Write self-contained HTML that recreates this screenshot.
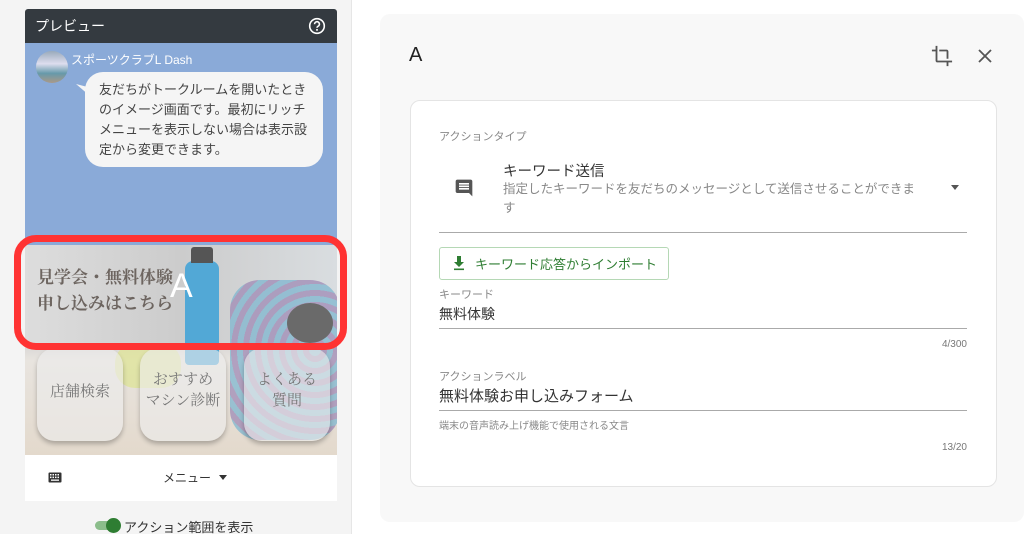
<!DOCTYPE html>
<html><head><meta charset="utf-8"><style>
*{box-sizing:border-box;margin:0;padding:0}
body{width:1024px;height:534px;overflow:hidden;background:#fff;font-family:"Liberation Sans","Noto Sans CJK JP",sans-serif;position:relative}
.abs{position:absolute}
.lcol{left:0;top:0;width:352px;height:534px;background:#f4f4f4;border-right:1px solid #e6e6e6}
.hdr{left:25px;top:9px;width:312px;height:34px;background:#343a40;border-radius:3px 3px 0 0;color:#fff;font-size:14px;line-height:34px;padding-left:10px}
.blue{left:25px;top:43px;width:312px;height:202px;background:#8aaad8}
.img{left:25px;top:245px;width:312px;height:210px;overflow:hidden;background:linear-gradient(180deg,#d8d8d8 0%,#d2d2d2 45%,#e8e4df 55%,#e3d9cc 100%)}
.bar{left:25px;top:455px;width:312px;height:46px;background:#fff}
.rp{left:380px;top:14px;width:644px;height:508px;background:#f8f8f8;border-radius:10px}
.card{left:410px;top:100px;width:587px;height:387px;background:#fff;border:1px solid #e4e4e4;border-radius:10px}
.lbl{font-size:11px;color:#888}
.val{font-size:15px;color:#333}
.line{height:1px;background:#aaa}
.btn{width:86px;height:93px;background:rgba(236,236,236,.6);border-radius:18px;box-shadow:0 3px 5px rgba(0,0,0,.25);text-align:center;color:#777;font-family:'Noto Serif CJK SC',serif;font-size:15px;line-height:21px}
</style></head><body>
<div class="abs lcol"></div>
<div class="abs hdr">プレビュー
<svg class="abs" style="left:283px;top:8px" width="18" height="18" viewBox="0 0 18 18"><circle cx="9" cy="9" r="7.3" fill="none" stroke="#fff" stroke-width="1.6"/><path d="M6.6 7.2a2.4 2.4 0 1 1 3.4 2.1c-.7.4-1 .8-1 1.5" fill="none" stroke="#fff" stroke-width="1.6"/><circle cx="9" cy="12.9" r="1" fill="#fff"/></svg></div>
<div class="abs blue">
 <div class="abs" style="left:11px;top:8px;width:32px;height:32px;border-radius:50%;background:linear-gradient(180deg,#9ab 0,#dde 40%,#69a 70%,#a98 100%)"></div>
 <div class="abs" style="left:46px;top:8px;color:#fff;font-size:12px">スポーツクラブL Dash</div>
 <div class="abs" style="left:51px;top:41px;width:14px;height:12px;background:#f5f5f5;clip-path:polygon(0 0,100% 30%,100% 100%)"></div>
 <div class="abs" style="left:60px;top:29px;width:238px;height:95px;background:#f5f5f5;border-radius:18px;padding:8px 14px 0 14px;font-size:13px;line-height:20px;color:#444">友だちがトークルームを開いたときのイメージ画面です。最初にリッチメニューを表示しない場合は表示設定から変更できます。</div>
</div>
<div class="abs img">
 <div class="abs" style="left:0;top:0;width:312px;height:100px;background:linear-gradient(90deg,#ddd,#ccc 50%,#d9dde0)"></div>
 <div class="abs" style="left:160px;top:16px;width:34px;height:104px;background:#52a8d6;border-radius:8px 8px 4px 4px"></div>
 <div class="abs" style="left:166px;top:2px;width:22px;height:16px;background:#555;border-radius:3px 3px 0 0"></div>
 <div class="abs" style="left:205px;top:35px;width:110px;height:160px;background:repeating-radial-gradient(circle at 85px 70px,#7fb6cf 0 6px,#9f8ab5 6px 12px);opacity:.75;border-radius:30px"></div>
 <div class="abs" style="left:262px;top:58px;width:46px;height:40px;border-radius:50%;background:#6a6a6a"></div>
 <div class="abs" style="left:90px;top:98px;width:66px;height:45px;border-radius:20px;background:#dfe39a;opacity:.8"></div>
 <div class="abs" style="left:12px;top:18px;color:#6d6560;font-family:'Noto Serif CJK SC',serif;font-weight:bold;font-size:17px;line-height:26px">見学会・無料体験<br>申し込みはこちら</div>
 <div class="abs" style="left:145px;top:22px;color:#fff;font-size:34px">A</div>
 <div class="abs btn" style="left:12px;top:103px;padding-top:32px">店舗検索</div>
 <div class="abs btn" style="left:115px;top:103px;padding-top:20px">おすすめ<br>マシン診断</div>
 <div class="abs btn" style="left:219px;top:103px;padding-top:20px">よくある<br>質問</div>
</div>
<div class="abs" style="left:14px;top:235px;width:333px;height:115px;border:7px solid #f33;border-radius:22px"></div>
<div class="abs bar">
 <svg class="abs" style="left:23px;top:17px" width="14" height="11" viewBox="0 0 14 11"><rect x=".5" y=".5" width="13" height="10" rx="1" fill="#333"/><g fill="#fff"><rect x="2" y="2" width="1.5" height="1.5"/><rect x="4.5" y="2" width="1.5" height="1.5"/><rect x="7" y="2" width="1.5" height="1.5"/><rect x="9.5" y="2" width="1.5" height="1.5"/><rect x="2" y="4.6" width="1.5" height="1.5"/><rect x="4.5" y="4.6" width="1.5" height="1.5"/><rect x="7" y="4.6" width="1.5" height="1.5"/><rect x="9.5" y="4.6" width="1.5" height="1.5"/><rect x="3" y="7.5" width="8" height="1.3"/></g></svg>
 <div class="abs" style="left:138px;top:14px;font-size:12px;color:#333">メニュー</div>
 <div class="abs" style="left:194px;top:20px;border-left:4px solid transparent;border-right:4px solid transparent;border-top:5px solid #333"></div>
</div>
<div class="abs" style="left:95px;top:521px;width:24px;height:9px;border-radius:5px;background:#8bbd8b"></div>
<div class="abs" style="left:106px;top:518px;width:15px;height:15px;border-radius:50%;background:#2e7d32"></div>
<div class="abs" style="left:124px;top:517px;font-size:13px;color:#333">アクション範囲を表示</div>

<div class="abs rp"></div>
<div class="abs" style="left:409px;top:44px;font-size:20px;color:#222">A</div>
<svg class="abs" style="left:931px;top:45px" width="22" height="22" viewBox="0 0 24 24"><path d="M17 15h2V7c0-1.1-.9-2-2-2H9v2h8v8zM7 17V1H5v4H1v2h4v10c0 1.1.9 2 2 2h10v4h2v-4h4v-2H7z" fill="#555"/></svg>
<svg class="abs" style="left:977px;top:48px" width="16" height="16" viewBox="0 0 16 16"><path d="M2 2l12 12M14 2L2 14" stroke="#555" stroke-width="1.8"/></svg>
<div class="abs card"></div>
<div class="abs lbl" style="left:439px;top:128px">アクションタイプ</div>
<svg class="abs" style="left:454px;top:178px" width="20" height="20" viewBox="0 0 24 24"><path d="M21.99 4c0-1.1-.89-2-1.99-2H4c-1.1 0-2 .9-2 2v12c0 1.1.9 2 2 2h14l4 4-.01-18zM18 14H6v-2h12v2zm0-3H6V9h12v2zm0-3H6V6h12v2z" fill="#555"/></svg>
<div class="abs" style="left:503px;top:160px;font-size:14.5px;color:#333">キーワード送信</div>
<div class="abs" style="left:503px;top:180px;width:440px;font-size:12.5px;line-height:19px;color:#888;white-space:nowrap">指定したキーワードを友だちのメッセージとして送信させることができま<br>す</div>
<div class="abs" style="left:951px;top:185px;border-left:4px solid transparent;border-right:4px solid transparent;border-top:5px solid #555"></div>
<div class="abs line" style="left:439px;top:232px;width:528px"></div>
<div class="abs" style="left:439px;top:247px;width:230px;height:33px;border:1px solid #b5d8b5;border-radius:3px"></div>
<svg class="abs" style="left:452px;top:255px" width="14" height="16" viewBox="0 0 14 16"><path d="M5 1h4v6h3L7 12 2 7h3z" fill="#2e7d32"/><rect x="2" y="13.5" width="10" height="1.6" fill="#2e7d32"/></svg>
<div class="abs" style="left:475px;top:254px;font-size:13px;color:#2e7d32">キーワード応答からインポート</div>
<div class="abs lbl" style="left:439px;top:286px">キーワード</div>
<div class="abs val" style="left:439px;top:304px;font-size:14px">無料体験</div>
<div class="abs line" style="left:439px;top:328px;width:528px"></div>
<div class="abs lbl" style="left:907px;top:339px;width:60px;text-align:right;font-size:10px;color:#777">4/300</div>
<div class="abs lbl" style="left:439px;top:368px">アクションラベル</div>
<div class="abs val" style="left:439px;top:385px">無料体験お申し込みフォーム</div>
<div class="abs line" style="left:439px;top:410px;width:528px"></div>
<div class="abs lbl" style="left:439px;top:417px;font-size:10px">端末の音声読み上げ機能で使用される文言</div>
<div class="abs lbl" style="left:907px;top:442px;width:60px;text-align:right;font-size:10px;color:#777">13/20</div>
</body></html>
